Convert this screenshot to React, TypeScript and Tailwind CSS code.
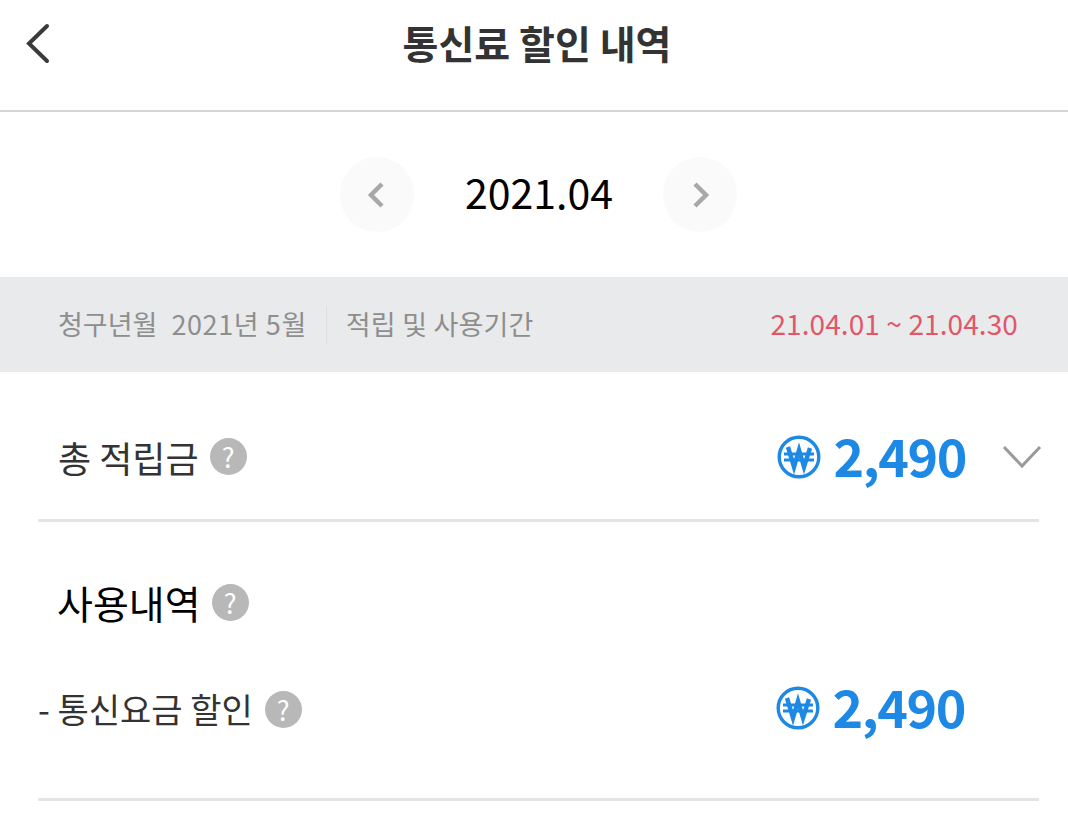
const fontStack = { fontFamily: '"Noto Sans CJK KR", "Noto Sans", sans-serif' };

const WonIcon = () => (
    <svg width="44" height="44" viewBox="0 0 44 44" fill="none" stroke="#1e88e5" className="shrink-0">
        <circle cx="22" cy="22" r="19.8" strokeWidth="3.4" />
        <path d="M11 12l6 20 5-17 5 17 6-19" strokeWidth="4.4" />
        <path d="M7 19h30M7 25h30" strokeWidth="3" />
    </svg>
);

const HelpIcon = () => (
    <span className="flex h-[37px] w-[37px] shrink-0 items-center justify-center rounded-full bg-[#b8b8b8] text-[27px] font-normal leading-none text-white">?</span>
);

const Amount = ({ value }: { value: string }) => (
    <div className="flex items-center gap-[12px]">
        <WonIcon />
        <span className="mb-[4px] text-[52px] font-bold leading-none tracking-[-1.4px] text-[#1e88e5]">{value}</span>
    </div>
);

const MonthButton = ({ points }: { points: string }) => (
    <button className="flex h-[75px] w-[74px] items-center justify-center rounded-full bg-[#fafafa]">
        <svg width="24" height="30" viewBox="0 0 24 30" fill="none" stroke="#a8a8a8" strokeWidth="4.5">
            <polyline points={points} />
        </svg>
    </button>
);

export default function App() {
    return (
        <div className="h-[839px] w-[1068px] overflow-hidden bg-white" style={fontStack}>
            <header className="relative flex h-[112px] items-center justify-center border-b-2 border-[#d6d6d6] pb-[26px] pl-[6px]">
                <svg width="30" height="44" viewBox="0 0 30 44" fill="none" stroke="#3a3a3a" strokeWidth="4" strokeLinecap="round" className="absolute left-[24px] top-[21px]">
                    <polyline points="23,5 5,22.5 23,40" />
                </svg>
                <h1 className="text-[39px] font-bold leading-none text-[#333]">통신료 할인 내역</h1>
            </header>

            <div className="flex h-[165px] items-center justify-center gap-[51px] pl-[9px]">
                <MonthButton points="17,4 6,15 17,26" />
                <span className="mb-[6px] w-[147px] whitespace-nowrap text-center text-[41px] font-normal leading-none text-black">2021.04</span>
                <MonthButton points="7,4 18,15 7,26" />
            </div>

            <div className="flex h-[95px] items-center justify-between bg-[#e9eaec] pl-[58px] pr-[50px] text-[27px] text-[#8e8e8e]">
                <div className="flex items-center">
                    <span>청구년월</span>
                    <span className="ml-[14px] tracking-[0.6px]">2021년 5월</span>
                    <span className="mx-[19px] h-[38px] w-px bg-[#dfdfe1]" />
                    <span className="tracking-[0.2px]">적립 및 사용기간</span>
                </div>
                <span className="mb-[3px] text-[28px] tracking-[0.1px] text-[#e2566a]">21.04.01 ~ 21.04.30</span>
            </div>

            <section className="ml-[38px] mr-[29px] flex h-[150px] items-center justify-between border-b-[3px] border-[#e4e4e4] pl-[20px] pt-[22px]">
                <div className="flex items-center gap-[11px]">
                    <span className="text-[36px] text-[#333]">총 적립금</span>
                    <HelpIcon />
                </div>
                <div className="flex items-center">
                    <Amount value="2,490" />
                    <svg width="40" height="26" viewBox="0 0 40 26" fill="none" stroke="#9a9a9a" strokeWidth="3" className="ml-[36px] -mr-[3px]">
                        <polyline points="2,3 20,22 38,3" />
                    </svg>
                </div>
            </section>

            <section className="ml-[38px] mr-[29px] h-[279px] border-b-[3px] border-[#e4e4e4]">
                <div className="flex items-center gap-[11px] pl-[19px] pt-[53px]">
                    <span className="text-[39px] font-normal leading-[54px] text-black">사용내역</span>
                    <HelpIcon />
                </div>
                <div className="mt-[51px] flex items-center justify-between pr-[74px]">
                    <div className="flex items-center gap-[12px]">
                        <span className="text-[34px] leading-[50px] text-[#333]">- 통신요금 할인</span>
                        <HelpIcon />
                    </div>
                    <div className="mb-[2px]">
                        <Amount value="2,490" />
                    </div>
                </div>
            </section>
        </div>
    );
}
